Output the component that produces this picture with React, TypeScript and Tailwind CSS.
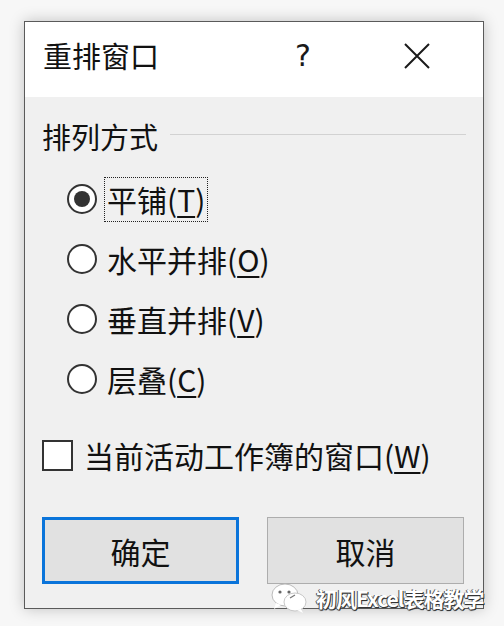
import React from "react";

const font = { fontFamily: '"Noto Sans CJK SC", "Noto Sans", sans-serif' };

function Radio({ checked }: { checked?: boolean }) {
  return (
    <span className="w-[30px] h-[30px] rounded-full border-[2px] border-[#333] bg-white flex items-center justify-center shrink-0">
      {checked && <span className="w-[16px] h-[16px] rounded-full bg-[#333]" />}
    </span>
  );
}

function RadioRow({ label, k, checked, focus }: { label: string; k: string; checked?: boolean; focus?: boolean }) {
  return (
    <div className="h-[60px] flex items-center pl-[25px]">
      <Radio checked={checked} />
      <span
        className={
          "ml-[7px] h-[45px] px-[2px] flex items-center border border-dotted " +
          (focus ? "border-[#222]" : "border-transparent")
        }
      >
        {label}(<span className="underline underline-offset-[4px] decoration-[2px]">{k}</span>)
      </span>
    </div>
  );
}

export default function App() {
  return (
    <div
      className="w-[504px] h-[626px] bg-[#f7f7f7] pt-[21px] pl-[24px] relative overflow-hidden text-[#111]"
      style={font}
    >
      <div className="w-[460px] h-[588px] border border-[#5a5a5a] flex flex-col shadow-[0_0_14px_rgba(0,0,0,0.22)]">
        <div className="h-[75px] bg-white flex items-center pl-[18px] pb-[8px] shrink-0">
          <span className="text-[29px] leading-none">重排窗口</span>
          <span
            className="ml-[136px] text-[30px] leading-none text-[#1a1a1a]"
            style={{ fontFamily: '"DejaVu Sans", sans-serif' }}
          >
            ?
          </span>
          <svg className="ml-[93px]" width="26" height="26" viewBox="0 0 26 26">
            <path d="M1 1 L25 25 M25 1 L1 25" stroke="#1a1a1a" strokeWidth="2" />
          </svg>
        </div>
        <div className="flex-1 bg-[#f0f0f0] pl-[17px] pr-[17px] pt-[19px] flex flex-col text-[30px] leading-none">
          <div className="h-[40px] flex items-center">
            <span className="text-[29px]">排列方式</span>
            <span className="flex-1 h-px bg-[#d2d2d2] ml-[12px] mb-[4px]" />
          </div>
          <div className="mt-[13px] flex flex-col">
            <RadioRow label="平铺" k="T" checked focus />
            <RadioRow label="水平并排" k="O" />
            <RadioRow label="垂直并排" k="V" />
            <RadioRow label="层叠" k="C" />
          </div>
          <div className="mt-[23px] h-[46px] flex items-center">
            <span className="w-[31px] h-[31px] border-[2px] border-[#333] bg-white shrink-0" />
            <span className="ml-[11px]">
              当前活动工作簿的窗口(<span className="underline underline-offset-[4px] decoration-[2px]">W</span>)
            </span>
          </div>
          <div className="mt-[39px] flex gap-[28px]">
            <div className="w-[197px] h-[67px] bg-[#e1e1e1] border-[3px] border-[#0a74da] flex items-center justify-center">
              确定
            </div>
            <div className="w-[197px] h-[67px] bg-[#e1e1e1] border border-[#adadad] flex items-center justify-center">
              取消
            </div>
          </div>
        </div>
      </div>
      <div className="absolute left-[270px] top-[582px] flex items-center">
        <svg width="38" height="32" viewBox="0 0 38 32">
          <ellipse cx="15" cy="13" rx="13" ry="11" fill="#fff" stroke="#bbb" strokeWidth="1" />
          <path d="M6 21 L4 27 L11 23 Z" fill="#fff" />
          <ellipse cx="25" cy="20" rx="11" ry="9" fill="#fff" stroke="#c8c8c8" strokeWidth="1" />
          <path d="M31 27 L33 31 L27 28 Z" fill="#fff" />
          <circle cx="10" cy="10" r="1.6" fill="#666" />
          <circle cx="19" cy="10" r="1.6" fill="#666" />
          <path d="M20 16 L25 13" stroke="#777" strokeWidth="1.3" />
        </svg>
        <span className="ml-[8px] text-[21px] font-bold leading-none text-white tracking-[-1px] [text-shadow:1px_1px_0_#333,-1px_0_0_#555,0_1px_1px_#222]">
          初风Excel表格教学
        </span>
      </div>
    </div>
  );
}
